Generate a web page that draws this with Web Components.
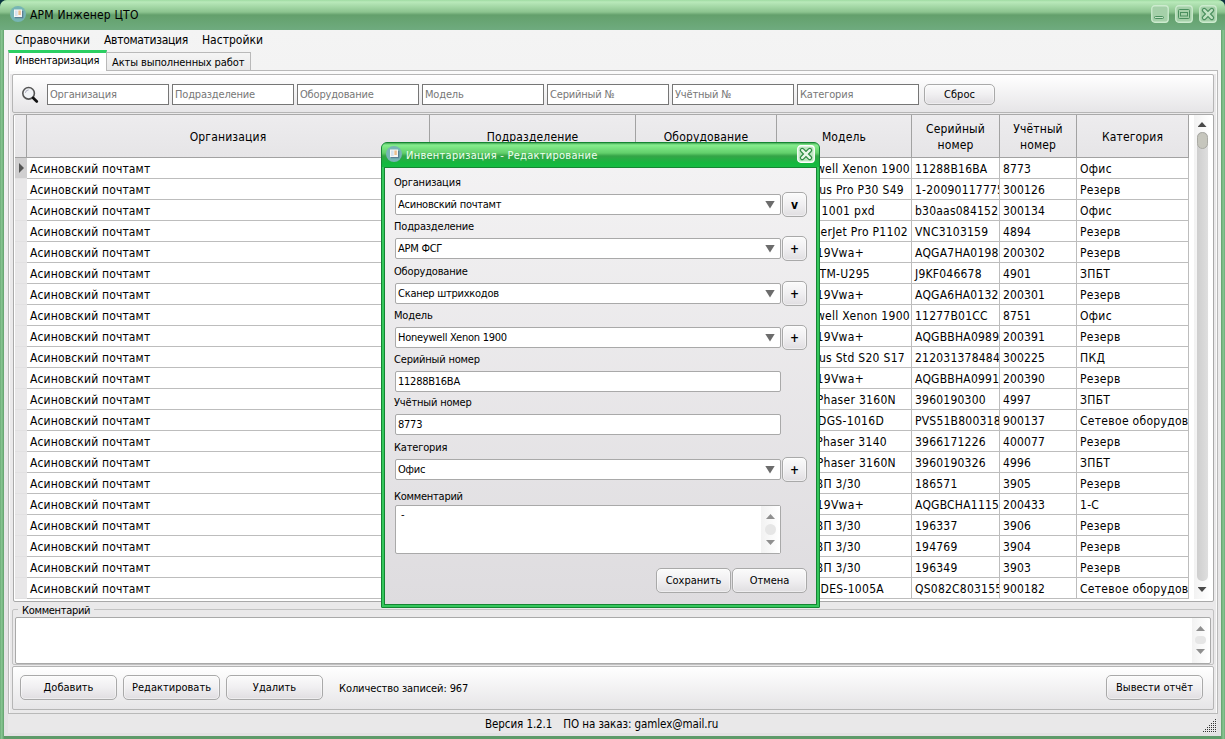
<!DOCTYPE html>
<html lang="ru">
<head>
<meta charset="utf-8">
<title>АРМ Инженер ЦТО</title>
<style>
    html, body { margin: 0; height: 100%; }
    body {
        background: #0b3540;
        font-family: "DejaVu Sans Condensed", "DejaVu Sans", sans-serif;
        font-size: 12px;
        color: #000;
        overflow: hidden;
    }
</style>
</head>
<body>
<arm-app></arm-app>
<script>
class ArmElement extends HTMLElement {
    constructor() {
        super();
        this.attachShadow({ mode: "open" });
    }

    connectedCallback() {
        this.shadowRoot.innerHTML = `<style>* { box-sizing: border-box; }</style>` + this.render();
    }

    attr(name, fallback = "") {
        return this.getAttribute(name) ?? fallback;
    }
}

// round program icon in the title bars
window.customElements.define("arm-logo", class extends ArmElement {
    render() {
        return `
            <style>
                :host { display: block; width: 16px; height: 16px; }
                svg { display: block; }
            </style>
            <svg width="16" height="16" viewBox="0 0 16 16">
                <circle cx="8" cy="8" r="8" fill="#76b5b4"/>
                <path d="M5 11.5h7.5V5" fill="none" stroke="#5a7f94" stroke-width="1.6"/>
                <rect x="4" y="3.5" width="8" height="7.5" fill="#f7f7f5"/>
                <rect x="5" y="4.5" width="2.6" height="5.5" fill="#d5e2ee"/>
                <rect x="8.4" y="4.5" width="2.4" height="4.5" fill="#ecbd8c"/>
            </svg>
        `;
    }
});

// min / max / close buttons of a title bar
window.customElements.define("arm-caption-button", class extends ArmElement {
    #glyphs = {
        min: `<rect x="3.5" y="11.5" width="9" height="2" rx="1" fill="#c6e6c8" stroke="currentColor"/>`,
        max: `<rect x="3.5" y="4.5" width="11" height="9" rx="1" fill="none" stroke="currentColor"/>
              <rect x="5.5" y="7.5" width="7" height="3.5" fill="none" stroke="currentColor"/>`,
        close: `<path d="M5.2 5.2 12.8 12.8M12.8 5.2 5.2 12.8" stroke="currentColor" stroke-width="4.8" stroke-linecap="round"/>
                <path d="M5.2 5.2 12.8 12.8M12.8 5.2 5.2 12.8" stroke="var(--cross, #c2e3c4)" stroke-width="2.4" stroke-linecap="round"/>`
    };

    render() {
        return `
            <style>
                :host { display: block; width: 18px; height: 18px; color: var(--glyph, #4a8f5e); }
                svg { display: block; }
                .box { fill: var(--box, #a5d0a9); stroke: var(--box-line, #cdebcf); }
            </style>
            <svg width="18" height="18" viewBox="0 0 18 18">
                <rect class="box" x=".75" y=".75" width="16.5" height="16.5" rx="3" stroke-width="1.3"/>
                ${this.#glyphs[this.attr("kind")]}
            </svg>
        `;
    }
});

window.customElements.define("arm-button", class extends ArmElement {
    render() {
        return `
            <style>
                :host {
                    display: flex;
                    flex: none;
                    align-items: center;
                    justify-content: center;
                    box-sizing: border-box;
                    height: 25px;
                    border: 1px solid #a9a9a9;
                    border-radius: 5px;
                    background: linear-gradient(#fbfbfb, #f0eff1 50%, #e0dee1);
                    box-shadow: inset 0 0 0 1px rgba(255, 255, 255, .45);
                    font-size: 11px;
                    white-space: nowrap;
                    letter-spacing: 0;
                }
            </style>
            <slot></slot>
        `;
    }
});

window.customElements.define("arm-scrollbar", class extends ArmElement {
    render() {
        return `
            <style>
                :host {
                    display: flex;
                    flex-direction: column;
                    align-items: center;
                    box-sizing: border-box;
                    width: 17px;
                    background: linear-gradient(90deg, #f2f2f2, #fff);
                    --arrow: #8f8f8f;
                }
                :host([track]) { --arrow: #4a4a4a; }
                i { width: 9px; height: 5px; background: var(--arrow); flex: none; }
                .up { clip-path: polygon(50% 0, 100% 100%, 0 100%); }
                .down { clip-path: polygon(0 0, 100% 0, 50% 100%); }
                .track { flex: 1; width: 11px; margin: 5px 0 6px; border-radius: 5px; }
                .thumb { width: 11px; height: 11px; border-radius: 6px; background: #e6e6e6; margin: auto; }
                :host([flat]) .thumb { height: 8px; }
                :host(:not([track])) .track { display: flex; margin: 0; }
                :host([track]) .track { background: linear-gradient(90deg, #cecece, #dedede); }
                :host([track]) .thumb {
                    height: 17px;
                    border: 1px solid #aaaaa4;
                    background: #c6c6bd;
                }
            </style>
            <i class="up"></i>
            <div class="track"><div class="thumb"></div></div>
            <i class="down"></i>
        `;
    }
});

window.customElements.define("arm-menu", class extends ArmElement {
    render() {
        const items = this.attr("items").split(",");
        return `
            <style>
                :host {
                    display: grid;
                    grid-template-columns: 89px 98px auto;
                    height: 20px;
                    padding-left: 11px;
                    line-height: 20px;
                }
                span:nth-of-type(2) { letter-spacing: -.3px; }
            </style>
            ${items.map(item => `<span>${item}</span>`).join("")}
        `;
    }
});

window.customElements.define("arm-tabs", class extends ArmElement {
    render() {
        return `
            <style>
                :host { display: flex; flex-direction: column; flex: 1; min-height: 0; }
                .tabs { display: flex; align-items: flex-end; height: 20px; padding-left: 4px; font-size: 11px; }
                .tab {
                    height: 18px;
                    width: 144px;
                    border: 1px solid #b9b9b9;
                    border-left: 0;
                    border-bottom: 0;
                    background: linear-gradient(#f5f5f5, #e9e9e9);
                    padding-left: 5px;
                    line-height: 19px;
                    white-space: nowrap;
                    letter-spacing: -.1px;
                }
                .active {
                    width: 99px;
                    height: 21px;
                    margin-bottom: -1px;
                    border: 1px solid #b9b9b9;
                    border-top: 3px solid #2bcf62;
                    border-bottom: 0;
                    background: #fff;
                    padding-left: 6px;
                    line-height: 16px;
                    letter-spacing: -.22px;
                    position: relative;
                }
                .pane {
                    flex: 1;
                    min-height: 0;
                    margin: 0 3px 0 4px;
                    border: 1px solid #b9b9b9;
                    box-shadow: inset 0 2px 0 1px #fafafa;
                    padding: 3px;
                    display: flex;
                    flex-direction: column;
                    background: #eae9ea;
                }
            </style>
            <div class="tabs">
                <div class="tab active">Инвентаризация</div>
                <div class="tab">Акты выполненных работ</div>
            </div>
            <div class="pane"><slot></slot></div>
        `;
    }
});

window.customElements.define("arm-filter", class extends ArmElement {
    #fields = ["Организация", "Подразделение", "Оборудование", "Модель", "Серийный №", "Учётный №", "Категория"];

    render() {
        return `
            <style>
                :host {
                    display: flex;
                    flex: none;
                    align-items: center;
                    box-sizing: border-box;
                    height: 39px;
                    padding: 2px 0 0 8px;
                    border: 1px solid #b5b5b5;
                    border-radius: 2px;
                    background: linear-gradient(#fff, #e6e5e7);
                }
                svg { margin-right: 8px; }
                .input {
                    width: 122px;
                    height: 21px;
                    margin-right: 3px;
                    border: 1px solid #767676;
                    background: #fff;
                    color: #777;
                    padding-left: 2px;
                    line-height: 19px;
                    font-size: 11px;
                    letter-spacing: -.18px;
                }
                arm-button { width: 71px; height: 21px; margin-left: 2px; }
            </style>
            <svg width="18" height="18" viewBox="0 0 18 18" fill="none">
                <circle cx="7.6" cy="7.3" r="5.8" fill="#f1f3f6" stroke="#555" stroke-width="1.6"/>
                <path d="M4.4 6.8a3.4 3.4 0 0 1 3.2-2.9" stroke="#aab" stroke-width="1"/>
                <path d="M12.2 12 15.8 15.4" stroke="#111" stroke-width="2.8" stroke-linecap="round"/>
            </svg>
            ${this.#fields.map(f => `<div class="input">${f}</div>`).join("")}
            <arm-button>Сброс</arm-button>
        `;
    }
});

window.customElements.define("arm-grid", class extends ArmElement {
    #headers = ["", "Организация", "Подразделение", "Оборудование", "Модель", "Серийный<br>номер", "Учётный<br>номер", "Категория"];

    // model, right inset of the model text, serial number, inventory number, category
    #rows = [
        ["Honeywell Xenon 1900", 1, "11288B16BA", "8773", "Офис"],
        ["us Pro P30 S49", 7, "1-20090117775", "300126", "Резерв"],
        ["1001 pxd", 36, "b30aas084152", "300134", "Офис"],
        ["erJet Pro P1102", 3, "VNC3103159", "4894", "Резерв"],
        ["19Vwa+", 47, "AQGA7HA0198", "200302", "Резерв"],
        ["TM-U295", 41, "J9KF046678", "4901", "ЗПБТ"],
        ["19Vwa+", 47, "AQGA6HA0132", "200301", "Резерв"],
        ["Honeywell Xenon 1900", 1, "11277B01CC", "8751", "Офис"],
        ["19Vwa+", 47, "AQGBBHA0989", "200391", "Резерв"],
        ["us Std S20 S17", 6, "212031378484", "300225", "ПКД"],
        ["19Vwa+", 47, "AQGBBHA0991", "200390", "Резерв"],
        ["Phaser 3160N", 15, "3960190300", "4997", "ЗПБТ"],
        ["DGS-1016D", 27, "PVS51B800318", "900137", "Сетевое оборудов"],
        ["Phaser 3140", 24, "3966171226", "400077", "Резерв"],
        ["Phaser 3160N", 15, "3960190326", "4996", "ЗПБТ"],
        ["ВП 3/30", 50, "186571", "3905", "Резерв"],
        ["19Vwa+", 47, "AQGBCHA1115", "200433", "1-С"],
        ["ВП 3/30", 50, "196337", "3906", "Резерв"],
        ["ВП 3/30", 50, "194769", "3904", "Резерв"],
        ["ВП 3/30", 50, "196349", "3903", "Резерв"],
        ["DES-1005A", 27, "QS082C803155", "900182", "Сетевое оборудов"]
    ];

    render() {
        const row = ([model, inset, serial, number, category], i) => `
            <div class="row">
                <div class="mark">${i === 0 ? "<i></i>" : ""}</div>
                <div>Асиновский почтамт</div>
                <div></div>
                <div></div>
                <div class="model" style="padding-right: ${inset}px">${model}</div>
                <div class="serial">${serial}</div>
                <div>${number}</div>
                <div class="category">${category}</div>
            </div>`;
        return `
            <style>
                :host {
                    display: flex;
                    flex: none;
                    box-sizing: border-box;
                    height: 488px;
                    margin: 1px 0 0 1px;
                    border: 1px solid #a9a9a9;
                    border-radius: 2px;
                    background: #fff;
                    padding: 0 3px 2px 1px;
                    letter-spacing: .15px;
                }
                .table { width: 1174px; flex: none; }
                .row {
                    display: grid;
                    grid-template-columns: 12px 403px 206px 141px 135px 88px 77px 112px;
                    height: 21px;
                }
                .row > div {
                    border-right: 1px solid #bdbdbd;
                    border-bottom: 1px solid #bdbdbd;
                    padding-left: 3px;
                    line-height: 22px;
                    white-space: nowrap;
                    overflow: hidden;
                }
                .row > .mark {
                    background: #e8e7e8;
                    border-right: 0;
                    border-bottom-color: #e2e1e2;
                    padding: 5px 0 0 4px;
                }
                .row > .model { display: flex; justify-content: flex-end; letter-spacing: .3px; }
                .serial { letter-spacing: .22px; }
                .category { letter-spacing: .3px; }
                .mark i { display: block; width: 5px; height: 10px; background: #555; clip-path: polygon(0 0, 100% 50%, 0 100%); }
                .row:nth-child(2) > .mark { background: #d0cfd0; }
                .head { height: 43px; }
                .head > div {
                    display: flex;
                    align-items: center;
                    justify-content: center;
                    text-align: center;
                    line-height: 16px;
                    padding: 2px 0 0;
                    background: linear-gradient(#edecee, #e6e5e7);
                    border-color: #a2a2a2;
                }
                arm-scrollbar { margin-left: auto; width: 16px; padding: 7px 0 7px; }
            </style>
            <div class="table">
                <div class="row head">${this.#headers.map(h => `<div>${h}</div>`).join("")}</div>
                ${this.#rows.map(row).join("")}
            </div>
            <arm-scrollbar track></arm-scrollbar>
        `;
    }
});

window.customElements.define("arm-comment", class extends ArmElement {
    render() {
        return `
            <style>
                :host { display: block; flex: none; height: 64px; }
                fieldset {
                    height: 63px;
                    margin: 0;
                    min-width: 0;
                    padding: 0 2px 1px 2px;
                    border: 1px solid #c2c2c2;
                    border-radius: 2px;
                    display: flex;
                }
                legend { margin-left: 3px; padding: 1px 4px 0; height: 15px; line-height: 15px; font-size: 11px; letter-spacing: -.3px; }
                .text {
                    display: flex;
                    justify-content: flex-end;
                    height: 47px;
                    flex: 1;
                    border: 1px solid #a9a9a9;
                    border-radius: 2px;
                    background: #fff;
                    padding-right: 1px;
                }
                arm-scrollbar { padding: 8px 0 9px; }
            </style>
            <fieldset>
                <legend>Комментарий</legend>
                <div class="text"><arm-scrollbar flat></arm-scrollbar></div>
            </fieldset>
        `;
    }
});

window.customElements.define("arm-toolbar", class extends ArmElement {
    render() {
        return `
            <style>
                :host {
                    display: flex;
                    flex: none;
                    align-items: center;
                    gap: 6px;
                    box-sizing: border-box;
                    height: 44px;
                    padding: 0 10px 2px 7px;
                    border: 1px solid #b5b5b5;
                    border-radius: 2px;
                    background: linear-gradient(#fff, #e6e5e7);
                    font-size: 11px;
                    letter-spacing: -.1px;
                }
                arm-button { width: 97px; }
                span { margin: 3px auto 0 10px; }
            </style>
            <arm-button>Добавить</arm-button>
            <arm-button>Редактировать</arm-button>
            <arm-button>Удалить</arm-button>
            <span>Количество записей: 967</span>
            <arm-button>Вывести отчёт</arm-button>
        `;
    }
});

window.customElements.define("arm-window", class extends ArmElement {
    render() {
        return `
            <style>
                :host {
                    display: flex;
                    flex-direction: column;
                    box-sizing: border-box;
                    width: 1225px;
                    height: 739px;
                    padding: 0 4px 3px;
                    border-radius: 7px 7px 0 0;
                    background: linear-gradient(90deg, #5f9f6b 0, #8cc795 1px, #74b67f 3px, #5e9a69 4px, #5e9a69 1221px, #74b67f 1222px, #8cc795 1224px, #5f9f6b);
                }
                header {
                    display: flex;
                    align-items: center;
                    height: 30px;
                    margin: 0 -4px;
                    padding: 0 8px 0 10px;
                    border-radius: 7px 7px 0 0;
                    background: linear-gradient(#9fdba2 0, #b9e9ba 2px, #8cc48f 12px, #64a06c 15px, #6aa777 24px, #6fab7f 30px);
                }
                h1 { flex: 1; margin: 0 0 0 4px; font-size: 12px; font-weight: normal; letter-spacing: .2px; }
                arm-logo { margin-top: -2px; }
                arm-caption-button { margin: -2px 0 0 6px; }
                main {
                    display: flex;
                    flex-direction: column;
                    flex: 1;
                    min-height: 0;
                    background: linear-gradient(#f4f4f4, #e3e2e3);
                }
            </style>
            <header>
                <arm-logo></arm-logo>
                <h1>${this.attr("caption")}</h1>
                <arm-caption-button kind="min"></arm-caption-button>
                <arm-caption-button kind="max"></arm-caption-button>
                <arm-caption-button kind="close"></arm-caption-button>
            </header>
            <main><slot></slot></main>
        `;
    }
});

window.customElements.define("arm-status", class extends ArmElement {
    render() {
        return `
            <style>
                :host {
                    display: flex;
                    flex: none;
                    height: 19px;
                    margin: 0 4px 3px;
                    background: #e9e8e9;
                    padding-left: 477px;
                    line-height: 20px;
                    white-space: pre;
                    font-size: 11.5px;
                    letter-spacing: -.08px;
                }
                .order { margin-left: 11px; }
                svg { margin: 5px 0 0 auto; }
            </style>
            <span>Версия 1.2.1</span><span class="order">ПО на заказ: gamlex@mail.ru</span>
            <svg width="14" height="14" viewBox="0 0 14 14">${this.#grip()}</svg>
        `;
    }

    #grip() {
        let dots = "";
        for (let y = 0; y < 7; y++)
            for (let x = 6 - y; x < 7; x++)
                dots += `<rect x="${x * 2}" y="${y * 2}" width="1" height="1" fill="#333"/>`;
        return dots;
    }
});

/*
Attributes:
  - label: text above the box
  - kind: combo or edit
  - button: text of the small button at the right, if any
 */
window.customElements.define("arm-field", class extends ArmElement {
    render() {
        const button = this.attr("button");
        return `
            <style>
                :host { display: block; height: 44px; letter-spacing: -.25px; }
                label { display: block; height: 19px; line-height: 19px; margin-left: -1px; letter-spacing: -.18px; }
                .line { display: flex; align-items: center; height: 25px; gap: 1px; }
                .box {
                    display: flex;
                    align-items: center;
                    justify-content: space-between;
                    width: 386px;
                    height: 21px;
                    border: 1px solid #a9a9a9;
                    border-radius: 2px;
                    background: #fff;
                    padding: 0 5px 0 2px;
                }
                i { width: 10px; height: 8px; background: #6c6c6c; clip-path: polygon(0 0, 100% 0, 50% 100%); }
                arm-button { width: 25px; }
                b { font-size: 12px; padding-top: 1px; }
            </style>
            <label>${this.attr("label")}</label>
            <div class="line">
                <div class="box"><slot></slot>${this.attr("kind") === "combo" ? "<i></i>" : ""}</div>
                ${button ? `<arm-button><b>${button}</b></arm-button>` : ""}
            </div>
        `;
    }
});

window.customElements.define("arm-dialog", class extends ArmElement {
    render() {
        return `
            <style>
                :host {
                    display: flex;
                    flex-direction: column;
                    box-sizing: border-box;
                    width: 439px;
                    height: 466px;
                    border: 1px solid #158533;
                    border-radius: 6px 6px 1px 1px;
                    background: #35c75c;
                    padding: 0 2px 2px;
                    font-size: 11px;
                    --glyph: #2d8a41;
                    --box: #bfe6c2;
                    --box-line: #fff;
                    --cross: #e8f7e9;
                }
                header {
                    display: flex;
                    align-items: center;
                    flex: none;
                    height: 24px;
                    margin: 0 -2px;
                    padding: 0 4px 0 4px;
                    border-radius: 5px 5px 0 0;
                    color: #effff0;
                    background: linear-gradient(#45a854 0, #86ee8e 2px, #62cf6b 10px, #35a447 13px, #14b83e 20px, #16bc42);
                }
                h2 { flex: 1; margin: 0 0 0 4px; font-size: 11px; font-weight: normal; letter-spacing: .26px; }
                arm-logo { margin-top: -2px; }
                arm-caption-button { margin-top: -2px; }
                main {
                    flex: 1;
                    min-height: 0;
                    border: 1px solid #158533;
                    background: linear-gradient(#f3f2f3, #dedcdf);
                    padding: 5px 0 0 10px;
                }
            </style>
            <header>
                <arm-logo></arm-logo>
                <h2>${this.attr("caption")}</h2>
                <arm-caption-button kind="close"></arm-caption-button>
            </header>
            <main><slot></slot></main>
        `;
    }
});

window.customElements.define("arm-edit-form", class extends ArmElement {
    render() {
        return `
            <style>
                :host { display: block; letter-spacing: -.25px; }
                .memo-label { height: 17px; line-height: 17px; margin: 6px 0 0 -1px; }
                .memo {
                    display: flex;
                    justify-content: space-between;
                    width: 386px;
                    height: 49px;
                    border: 1px solid #a9a9a9;
                    border-radius: 2px;
                    background: #fff;
                    padding-left: 5px;
                    line-height: 18px;
                }
                .memo arm-scrollbar { width: 19px; padding: 8px 0; }
                .buttons { display: flex; gap: 1px; justify-content: flex-end; margin: 14px 9px 0 0; }
                .buttons arm-button { width: 75px; }
            </style>
            <arm-field label="Организация" kind="combo" button="v">Асиновский почтамт</arm-field>
            <arm-field label="Подразделение" kind="combo" button="+" style="margin-bottom: 1px">АРМ ФСГ</arm-field>
            <arm-field label="Оборудование" kind="combo" button="+">Сканер штрихкодов</arm-field>
            <arm-field label="Модель" kind="combo" button="+">Honeywell Xenon 1900</arm-field>
            <arm-field label="Серийный номер" kind="edit" style="margin-bottom: -1px">11288B16BA</arm-field>
            <arm-field label="Учётный номер" kind="edit" style="margin-bottom: 1px">8773</arm-field>
            <arm-field label="Категория" kind="combo" button="+">Офис</arm-field>
            <div class="memo-label">Комментарий</div>
            <div class="memo"><span>-</span><arm-scrollbar></arm-scrollbar></div>
            <div class="buttons">
                <arm-button>Сохранить</arm-button>
                <arm-button>Отмена</arm-button>
            </div>
        `;
    }
});

window.customElements.define("arm-app", class extends ArmElement {
    render() {
        return `
            <style>
                :host { display: block; }
                arm-dialog { position: absolute; left: 381px; top: 142px; }
            </style>
            <arm-window caption="АРМ Инженер ЦТО">
                <arm-menu items="Справочники,Автоматизация,Настройки"></arm-menu>
                <arm-tabs>
                    <arm-filter></arm-filter>
                    <arm-grid></arm-grid>
                    <arm-comment></arm-comment>
                    <arm-toolbar></arm-toolbar>
                </arm-tabs>
                <arm-status></arm-status>
            </arm-window>
            <arm-dialog caption="Инвентаризация - Редактирование">
                <arm-edit-form></arm-edit-form>
            </arm-dialog>
        `;
    }
});
</script>
</body>
</html>
